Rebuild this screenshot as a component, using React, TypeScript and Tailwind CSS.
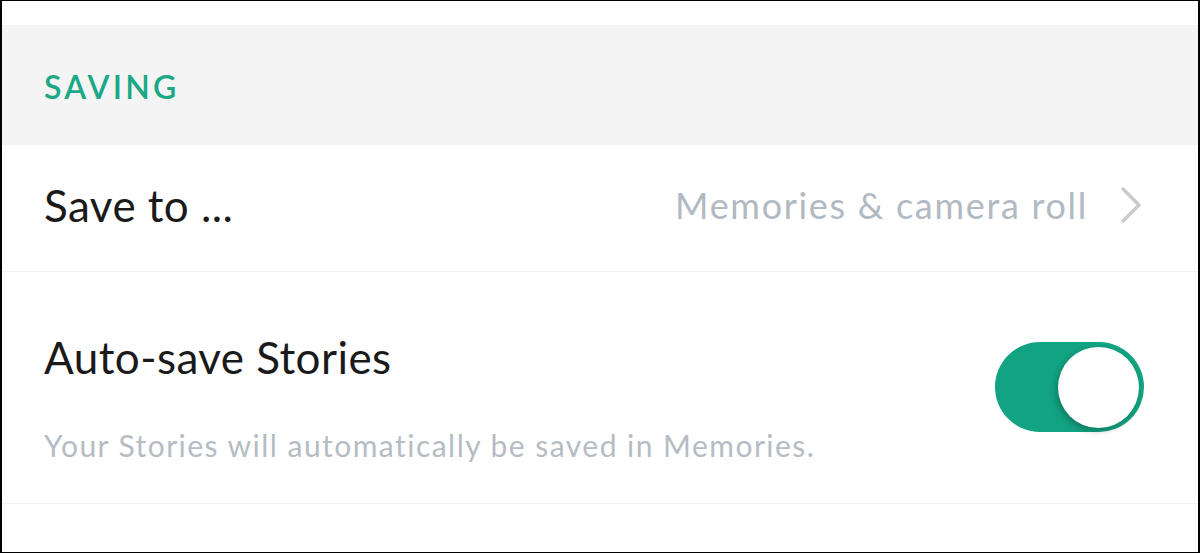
function Chevron() {
  return (
    <svg width="24" height="38" viewBox="0 0 24 38" fill="none" className="shrink-0">
      <polyline
        points="4,3 20,19 4,35"
        stroke="#c8cbce"
        strokeWidth="3.5"
        strokeLinecap="round"
        strokeLinejoin="round"
      />
    </svg>
  );
}

function Toggle({ on }: { on: boolean }) {
  return (
    <div
      className={`relative flex h-[90px] w-[149px] shrink-0 items-center rounded-full ${
        on ? "justify-end bg-[#12a382]" : "justify-start bg-[#e5e5e5]"
      } px-[5px]`}
    >
      <div className="h-[81px] w-[81px] rounded-full bg-white shadow-[-2px_3px_6px_rgba(0,0,0,0.25)]" />
    </div>
  );
}

export default function App() {
  return (
    <div
      className="flex h-[553px] w-[1200px] flex-col overflow-hidden border-y border-x-2 border-black bg-white text-[#1a1a1a]"
      style={{ fontFamily: "Lato, 'Noto Sans', sans-serif" }}
    >
      <div className="h-[24px]" />

      <div className="flex h-[120px] items-start bg-[#f4f4f4] pl-[42px] pt-[42px]">
        <span className="text-[32px] font-semibold leading-[40px] tracking-[0.1em] text-[#1aa886]">
          SAVING
        </span>
      </div>

      <div className="flex h-[127px] items-center justify-between border-b border-[#f1f1f1] pb-[6px] pl-[42px] pr-[55px]">
        <span className="text-[44px] leading-[52px] tracking-[0.01em]">Save to ...</span>
        <div className="flex items-center gap-[31px]">
          <span className="text-[36px] leading-[44px] tracking-[0.047em] text-[#b1bac3]">
            Memories &amp; camera roll
          </span>
          <Chevron />
        </div>
      </div>

      <div className="flex h-[232px] items-start justify-between border-b border-[#f1f1f1] pl-[42px] pr-[54px] pt-[59px]">
        <div className="flex flex-col">
          <span className="text-[44px] leading-[52px] tracking-[0.01em]">Auto-save Stories</span>
          <span className="mt-[44px] text-[30px] leading-[36px] tracking-[0.049em] text-[#b5bcc4]">
            Your Stories will automatically be saved in Memories.
          </span>
        </div>
        <div className="mt-[11px]">
          <Toggle on />
        </div>
      </div>

      <div className="flex-1" />
    </div>
  );
}
